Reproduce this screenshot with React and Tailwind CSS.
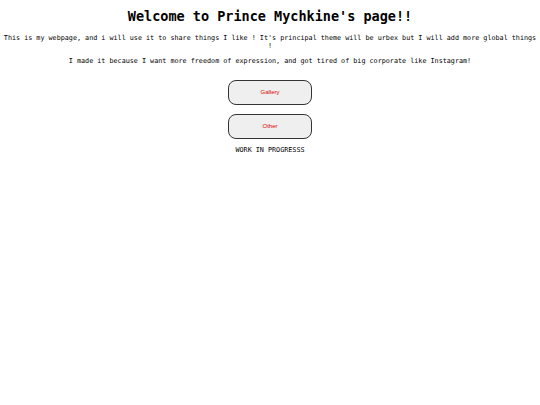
export default function App() {
  const mono = { fontFamily: '"DejaVu Sans Mono", monospace' };
  return (
    <div className="min-h-screen bg-white text-black" style={mono}>
      <div className="flex flex-col items-center text-center">
        <h1 className="mt-[8px] text-[13.5px] font-bold leading-[16px]">
          Welcome to Prince Mychkine's page!!
        </h1>
        <p className="mt-[10px] px-[1px] text-[6.75px] leading-[8px]">
          This is my webpage, and i will use it to share things I like ! It's principal theme will be urbex but I will add more global things !
        </p>
        <p className="mt-[7px] text-[6.75px] leading-[8px]">
          I made it because I want more freedom of expression, and got tired of big corporate like Instagram!
        </p>
        <div className="mt-[15px] flex flex-col items-center gap-[9px]">
          <button
            type="button"
            className="h-[25px] w-[84px] rounded-[8px] border border-[#333] bg-[#efefef] text-[6px] text-[#e00000]"
            style={{ fontFamily: '"Liberation Sans", Arial, sans-serif' }}
          >
            Gallery
          </button>
          <button
            type="button"
            className="h-[25px] w-[84px] rounded-[8px] border border-[#333] bg-[#efefef] text-[6px] text-[#e00000]"
            style={{ fontFamily: '"Liberation Sans", Arial, sans-serif' }}
          >
            Other
          </button>
        </div>
        <p className="mt-[7px] text-[6.75px] leading-[8px]">WORK IN PROGRESSS</p>
      </div>
    </div>
  );
}
